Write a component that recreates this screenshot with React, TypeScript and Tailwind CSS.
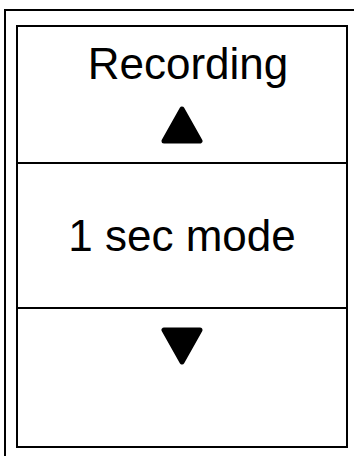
// Settings screen: recording mode selector

function Arrow({ down = false }: { down?: boolean }) {
  return (
    <svg width="42" height="38" viewBox="0 0 42 38" className="block">
      <polygon
        points={down ? '3,3 39,3 21,35' : '21,3 39,35 3,35'}
        fill="#000"
        stroke="#000"
        strokeWidth="5"
        strokeLinejoin="round"
      />
    </svg>
  );
}

export default function App() {
  return (
    <div className="w-[354px] h-[456px] overflow-hidden bg-white pl-[4px] pt-[9px] font-['Liberation_Sans',Arial,sans-serif] text-black">
      <div className="w-[400px] h-[500px] border-l-2 border-t-2 border-black pl-[10px] pt-[14px]">
        <div className="w-[332px] h-[423px] border-2 border-black flex flex-col">
          {/* Title + up arrow */}
          <div className="h-[135px] flex flex-col items-center pt-[15px]">
            <div className="text-[44px] leading-none pl-[12px]">Recording</div>
            <div className="mt-[20px]">
              <Arrow />
            </div>
          </div>
          <div className="h-[2px] bg-black" />
          {/* Current value */}
          <div className="h-[143px] flex items-center justify-center">
            <div className="text-[44px] leading-none">1 sec mode</div>
          </div>
          <div className="h-[2px] bg-black" />
          {/* Down arrow */}
          <div className="flex-1 flex flex-col items-center pt-[18px]">
            <Arrow down />
          </div>
        </div>
      </div>
    </div>
  );
}
